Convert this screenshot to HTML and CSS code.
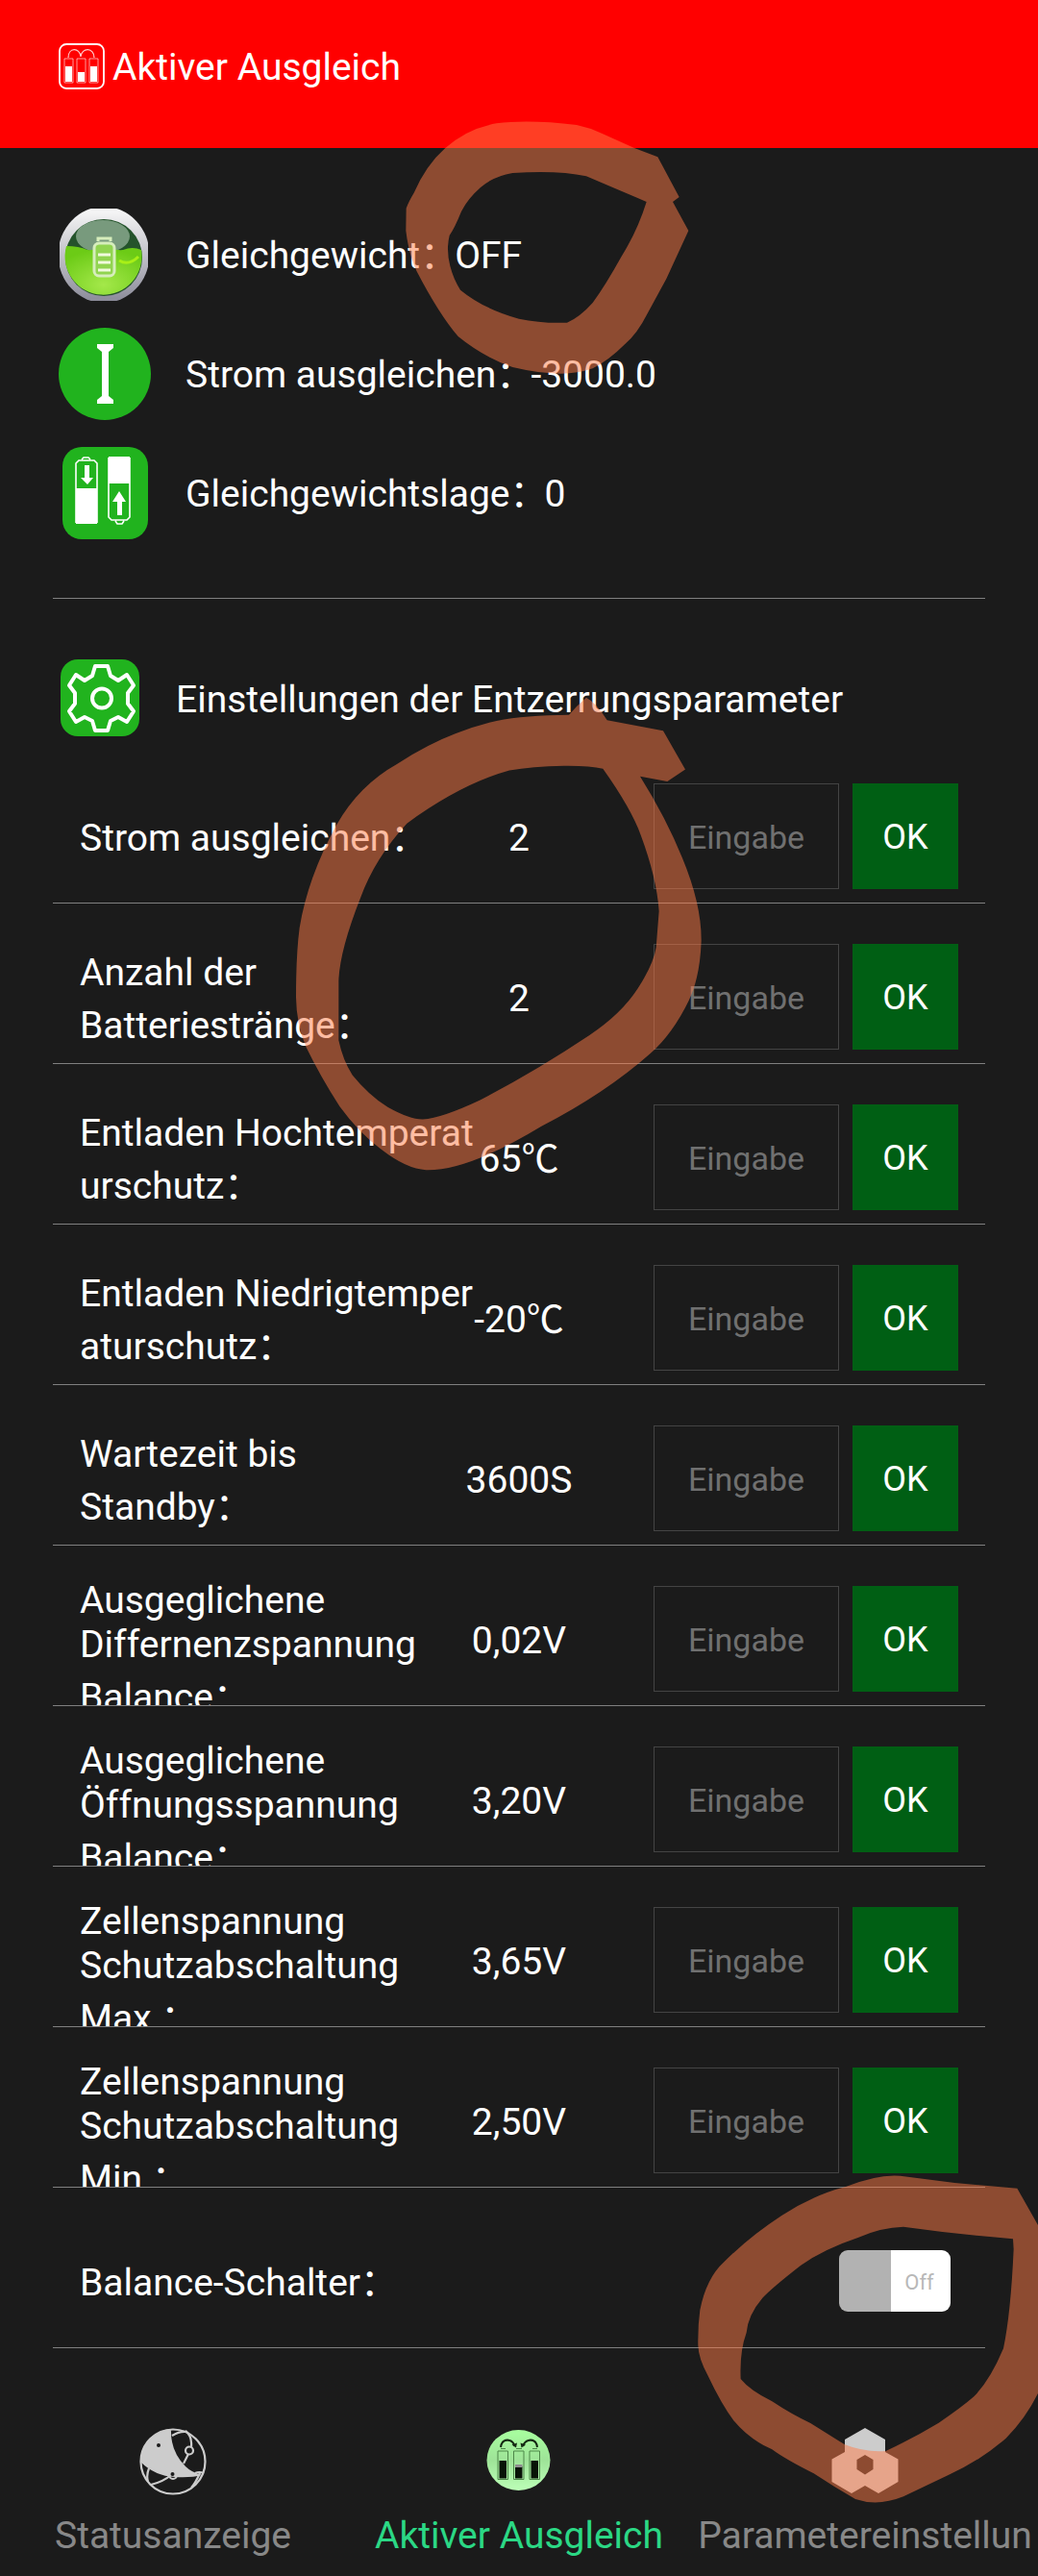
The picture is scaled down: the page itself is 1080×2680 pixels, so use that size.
FILE: index.html
```html
<!DOCTYPE html>
<html lang="de">
<head>
    <meta charset="UTF-8">
    <meta name="viewport" content="width=device-width, initial-scale=1.0">
    <title>Aktiver Ausgleich</title>
    <link rel="stylesheet" href="styles.css">
</head>
<body>
    <div class="app">
        <!-- Top bar -->
        <header class="topbar">
            <svg class="topbar-icon" viewBox="0 0 48 48" fill="none" stroke="#fff">
                <rect x="1" y="1" width="46" height="46" rx="7" stroke-width="1.8"/>
                <path d="M10 15C10 4 22 4 23 14C24 4 37 4 37 15" stroke-width="1.2" opacity=".8"/>
                <path d="M6 16h9v25H6zM19 16h9v25h-9zM32 16h9v25h-9z" stroke-width="1" opacity=".6"/>
                <path d="M7 24h7v16H7zM20 30h7v10h-7zM33 24h7v16h-7z" fill="#fff" stroke="none"/>
            </svg>
            <h1>Aktiver Ausgleich</h1>
        </header>

        <main class="content">
            <!-- Current state -->
            <section class="info">
                <div class="info-row">
                    <svg class="info-icon" viewBox="0 0 96 96">
                        <defs>
                            <linearGradient id="ring" x1="0" y1="0" x2="0" y2="1">
                                <stop offset="0" stop-color="#fafafa"/>
                                <stop offset="1" stop-color="#8a8a98"/>
                            </linearGradient>
                            <radialGradient id="liquid" cx=".5" cy=".8" r=".7">
                                <stop offset="0" stop-color="#a4e84a"/>
                                <stop offset="1" stop-color="#6ccb16"/>
                            </radialGradient>
                            <clipPath id="round"><rect x="1" width="92" height="96"/></clipPath>
                        </defs>
                        <g clip-path="url(#round)">
                            <ellipse cx="47" cy="48" rx="47.500" ry="50" fill="url(#ring)"/>
                            <circle cx="47" cy="51" r="40" fill="#24532b"/>
                            <ellipse cx="46" cy="29" rx="28" ry="17" fill="#789a7d"/>
                            <path d="M8 39Q21 39 30 43Q39 44 48 37Q56 44 67 43Q77 39 86 43A40 40 0 1 1 8 39Z" fill="url(#liquid)"/>
                            <path d="M63 54Q73 60 83 50" fill="none" stroke="#a8ef17" stroke-width="3"/>
                        </g>
                        <rect x="37" y="36" width="21" height="34" rx="5" fill="#91d450" stroke="#d6edbc" stroke-width="3"/>
                        <path d="M41 34v-3h13v3" fill="none" stroke="#d6edbc" stroke-width="3"/>
                        <path d="M41 48h13M41 56h13M41 64h13" stroke="#f0fadd" stroke-width="3"/>
                    </svg>
                    <p>Gleichgewicht：<span>OFF</span></p>
                </div>
                <div class="info-row">
                    <svg class="info-icon" viewBox="0 0 96 96">
                        <circle cx="48" cy="48" r="48" fill="#21b31e"/>
                        <path d="M40 17h17v4l-5 4v46l5 4v4H40v-4l5-4V25l-5-4z" fill="#fff"/>
                    </svg>
                    <p>Strom ausgleichen：<span>-3000.0</span></p>
                </div>
                <div class="info-row">
                    <svg class="info-icon" viewBox="0 0 96 96">
                        <rect x="4" width="89" height="96" rx="20" fill="#21b31e"/>
                        <g fill="none" stroke="#fff" stroke-width="1.6">
                            <path d="M18 79V17l3-3h16l3 3v62M24 13l2-2h5l2 2"/>
                            <path d="M52 11v62l3 3h16l3-3V11M59 77l2 3h5l2-3"/>
                        </g>
                        <path d="M18 43h22v37H18zM52 10h22v28H52z" fill="#fff"/>
                        <path d="M27 19h5v13h4l-6 7-7-7h4zM61 71h5V57h4l-7-11-7 11h5z" fill="#fff"/>
                    </svg>
                    <p>Gleichgewichtslage：<span>0</span></p>
                </div>
            </section>

            <!-- Parameters -->
            <section class="settings">
                <div class="settings-title">
                    <svg class="settings-icon" viewBox="0 0 82 80">
                        <rect width="82" height="80" rx="18" fill="#21b31e"/>
                        <g fill="none" stroke="#fff" stroke-width="4" stroke-linejoin="round">
                            <path d="M36 7h13l3 10 8 5 9-6 7 11-6 8v11l6 8-7 11-9-5-8 4-3 10H36l-3-10-8-4-9 5-7-11 6-8V35l-6-8 7-11 9 6 8-5z"/>
                            <circle cx="43" cy="40.500" r="10"/>
                        </g>
                    </svg>
                    <h2>Einstellungen der Entzerrungsparameter</h2>
                </div>

                <div class="row">
                    <div class="label one"><span class="last">Strom ausgleichen：</span></div>
                    <div class="value">2</div>
                    <input type="text" placeholder="Eingabe">
                    <button type="button">OK</button>
                </div>
                <div class="row">
                    <div class="label two"><span>Anzahl der</span><span class="last">Batteriestränge：</span></div>
                    <div class="value">2</div>
                    <input type="text" placeholder="Eingabe">
                    <button type="button">OK</button>
                </div>
                <div class="row">
                    <div class="label two"><span>Entladen Hochtemperat</span><span class="last">urschutz：</span></div>
                    <div class="value">65℃</div>
                    <input type="text" placeholder="Eingabe">
                    <button type="button">OK</button>
                </div>
                <div class="row">
                    <div class="label two"><span>Entladen Niedrigtemper</span><span class="last">aturschutz：</span></div>
                    <div class="value">-20℃</div>
                    <input type="text" placeholder="Eingabe">
                    <button type="button">OK</button>
                </div>
                <div class="row">
                    <div class="label two"><span>Wartezeit bis</span><span class="last">Standby：</span></div>
                    <div class="value">3600S</div>
                    <input type="text" placeholder="Eingabe">
                    <button type="button">OK</button>
                </div>
                <div class="row">
                    <div class="label three"><span>Ausgeglichene</span><span>Differnenzspannung</span><span class="last">Balance：</span></div>
                    <div class="value">0,02V</div>
                    <input type="text" placeholder="Eingabe">
                    <button type="button">OK</button>
                </div>
                <div class="row">
                    <div class="label three"><span>Ausgeglichene</span><span>Öffnungsspannung</span><span class="last">Balance：</span></div>
                    <div class="value">3,20V</div>
                    <input type="text" placeholder="Eingabe">
                    <button type="button">OK</button>
                </div>
                <div class="row">
                    <div class="label three"><span>Zellenspannung</span><span>Schutzabschaltung</span><span class="last">Max ：</span></div>
                    <div class="value">3,65V</div>
                    <input type="text" placeholder="Eingabe">
                    <button type="button">OK</button>
                </div>
                <div class="row">
                    <div class="label three"><span>Zellenspannung</span><span>Schutzabschaltung</span><span class="last">Min ：</span></div>
                    <div class="value">2,50V</div>
                    <input type="text" placeholder="Eingabe">
                    <button type="button">OK</button>
                </div>
                <div class="row">
                    <div class="label one"><span class="last">Balance-Schalter：</span></div>
                    <div class="switch"><span>Off</span></div>
                </div>
            </section>
        </main>

        <!-- Bottom navigation -->
        <nav class="tabs">
            <a class="tab">
                <svg class="tab-icon" viewBox="0 0 70 70">
                    <g fill="none" stroke="#ccc" stroke-width="2.200">
                        <circle cx="35" cy="35" r="33.500"/>
                        <path d="M34 8Q42 3 49 4M48 3Q55 8 54 20M51 27L46 37M10 42Q7 49 9 56M12 59Q25 56 34 48M67 47Q62 45 58 47M63 47Q58 58 54 62"/>
                        <circle cx="52" cy="23.500" r="4"/>
                        <circle cx="35" cy="49" r="4"/>
                    </g>
                    <path d="M33 1Q32 24 48 40Q54 46 65 49Q54 52 37 51Q16 50 1 35A34 34 0 0 1 33 1Z" fill="#ccc"/>
                    <circle cx="20" cy="18" r="2" fill="#1b1b1b"/>
                    <circle cx="34.500" cy="48" r="2" fill="#1b1b1b"/>
                </svg>
                <span>Statusanzeige</span>
            </a>
            <a class="tab active">
                <svg class="tab-icon" viewBox="0 0 70 70">
                    <defs>
                        <linearGradient id="mint" x1="0" y1="0" x2="0" y2="1">
                            <stop offset="0" stop-color="#a8ff9f"/>
                            <stop offset=".5" stop-color="#9ee398"/>
                            <stop offset="1" stop-color="#bcffb7"/>
                        </linearGradient>
                    </defs>
                    <ellipse cx="34.500" cy="33.500" rx="33" ry="31.500" fill="url(#mint)"/>
                    <path d="M13 24h10.500v29.500H13zM29.500 24H40v29.500H29.500zM46 24h10.500v29.500H46zM16 21.500h5M32 21.500h6M49 21.500h5" fill="none" stroke="#4d8749" stroke-width="1"/>
                    <path d="M16 20Q17 12.500 23 12.500Q29 13 30.500 19M54 20Q53 12.500 47 12.500Q41 13 39 19" fill="none" stroke="#132812" stroke-width="2"/>
                    <path d="M27.500 17.500l4.500 3 1-5zM42 17.500l-4.500 3-1-5z" fill="#132812"/>
                    <path d="M14.500 34h7.500v18.500h-7.500zM31 40h7.500v12.500H31zM47.500 34H55v18.500h-7.500z" fill="#081307"/>
                    <path d="M31 38h7.500v3H31z" fill="#8f8f8f"/>
                </svg>
                <span>Aktiver Ausgleich</span>
            </a>
            <a class="tab">
                <svg class="tab-icon" viewBox="0 0 70 70">
                    <path d="M35 0L56 12V25L69.500 32.500V56L49 68L35 60L21 68L.5 56V32.500L14 25V12ZM35 28L26.500 33V43L35 48.500L43.500 43V33Z" fill="#ccc" fill-rule="evenodd"/>
                </svg>
                <span>Parametereinstellun</span>
            </a>
        </nav>

        <!-- Marker strokes lying over the page -->
        <svg class="marks" viewBox="0 0 1080 2680">
            <g fill="#ff7c48" fill-opacity=".5" fill-rule="evenodd">
                <path transform="translate(400 100) scale(.33333)" d="M853 190L920 315L900 330L949 420L880 570L820 680Q790 740 750 775Q700 825 650 850Q600 867 545 866Q480 865 400 846Q310 815 230 750Q170 680 100 545Q75 490 67 420L68 350Q75 330 92 302Q130 215 190 162Q260 100 350 85Q450 72 600 90Q640 98 680 117L780 162Z
                    M818 330Q700 280 630 250Q540 230 400 240Q340 250 300 285Q260 320 240 360Q220 410 203 435Q192 480 205 530Q215 570 237 605Q310 665 420 695Q490 710 570 707Q610 690 650 645Q690 590 740 500Q790 420 818 330Z"/>
                <path transform="translate(280 700) scale(.33333 .34435)" d="M936 127Q960 100 990 75Q1020 90 1055 143L1230 175L1299 292L1243 328L1158 313Q1240 440 1290 560Q1350 700 1349 810Q1345 920 1310 990Q1260 1090 1190 1150Q1050 1270 850 1370Q620 1505 490 1502Q430 1500 350 1440Q280 1390 220 1310Q160 1220 115 1130Q85 1060 84 980Q84 850 95 770Q120 620 210 460Q280 340 400 275Q550 180 710 145Q800 128 936 127Z
                    M1042 290Q1000 280 920 281Q820 283 750 295Q600 335 430 455Q330 560 285 680Q220 840 217 930L217 1110Q230 1170 260 1215Q310 1275 370 1312Q440 1350 480 1349Q540 1345 660 1290Q830 1205 1000 1095Q1100 1030 1150 955Q1200 880 1208 830L1217 720Q1210 620 1160 490Q1130 410 1042 290Z"/>
                <path transform="translate(700 2240) scale(.33333)" d="M1075 110L1140 225L1140 750Q1100 830 1040 890Q960 960 860 1005L720 1072Q640 1104 570 1080Q500 1040 440 1000Q350 955 310 925Q240 895 190 835Q150 780 110 695Q80 640 79 600Q78 540 85 490Q105 390 160 340Q240 260 340 195Q440 130 540 105Q640 65 710 71L880 93Z
                    M1062 268Q900 255 720 230Q650 232 580 263Q470 300 400 350Q310 420 280 452Q235 505 230 560Q208 620 212 705Q240 740 310 775Q370 815 430 843L537 910Q600 935 665 930Q750 890 830 842Q900 795 940 760Q990 710 1032 610Q1055 500 1064 300Z"/>
            </g>
        </svg>
    </div>
</body>
</html>
```
FILE: styles.css
```css
* {
    box-sizing: border-box;
}

/* General styling for the body */
body {
    margin: 0;
    background-color: #1b1b1b;
    color: #fff;
    font-family: Roboto, "Noto Sans CJK SC", sans-serif;
    font-size: 39px;
    line-height: 46px;
}

h1, h2, p {
    margin: 0;
    font-size: inherit;
    font-weight: 400;
}

.app {
    position: relative;
    width: 1080px;
    height: 2680px;
    overflow: hidden;
}

/* Top bar */
.topbar {
    display: flex;
    align-items: center;
    gap: 8px;
    height: 154px;
    padding: 0 61px 17px;
    background: #ff0000;
}

.topbar h1 {
    padding-top: 2px;
}

.topbar-icon {
    width: 48px;
    height: 48px;
}

.content {
    padding: 0 55px;
}

/* State values with icons */
.info {
    display: flex;
    flex-direction: column;
    gap: 28px;
    padding: 63px 6px 61px;
    border-bottom: 1px solid #808080;
}

.info-row {
    display: flex;
    align-items: center;
    gap: 36px;
    height: 96px;
}

.info-row p {
    padding-top: 2px;
}

.info-row p span {
    margin-left: -3px;
}

.info-icon {
    width: 96px;
    height: 96px;
}

/* Settings heading */
.settings-title {
    display: flex;
    align-items: center;
    gap: 38px;
    padding: 63px 8px 7px;
}

.settings-title h2 {
    padding-top: 4px;
}

.settings-icon {
    width: 82px;
    height: 80px;
}

/* One parameter per row */
.row {
    display: flex;
    align-items: flex-start;
    height: 167px;
    padding: 0 28px;
    border-bottom: 1px solid #808080;
    overflow: hidden;
}

.label {
    flex: 0 0 357px;
    min-width: 0;
    white-space: nowrap;
}

.label span {
    display: block;
}

.label .last {
    padding-top: 9px;
}

.label.one {
    padding-top: 67px;
}

.label.two {
    padding-top: 49px;
}

.label.three {
    padding-top: 34px;
}

.value {
    flex: 0 0 200px;
    margin-right: 40px;
    padding-top: 76px;
    text-align: center;
}

input {
    width: 193px;
    height: 110px;
    margin: 42px 14px 0 0;
    padding: 2px 0 0;
    border: 1px solid #444;
    background: transparent;
    color: #fff;
    font-family: inherit;
    font-size: 34px;
    text-align: center;
}

input::placeholder {
    color: #707070;
}

button {
    width: 110px;
    height: 110px;
    margin-top: 42px;
    padding: 2px 0 0;
    border: none;
    background: #005f14;
    color: #fff;
    font-family: inherit;
    font-size: 36px;
}

/* Off switch */
.switch {
    display: flex;
    width: 116px;
    height: 64px;
    margin: 65px 8px 0 auto;
    padding-left: 54px;
    border-radius: 9px;
    background: linear-gradient(to right, #b2b2b2 54px, #fff 54px);
    color: #b8b8b8;
    font-size: 22px;
    line-height: 68px;
}

.switch span {
    flex: 1;
    padding-right: 3px;
    text-align: center;
}

/* Bottom navigation */
.tabs {
    display: flex;
    padding-top: 83px;
}

.tab {
    display: flex;
    flex: 0 0 360px;
    flex-direction: column;
    align-items: center;
    gap: 19px;
    color: #888;
}

.tab.active {
    color: #2bd885;
}

.tab-icon {
    width: 70px;
    height: 70px;
}

/* Marker strokes */
.marks {
    position: absolute;
    top: 0;
    left: 0;
    width: 1080px;
    height: 2680px;
    pointer-events: none;
}
```
